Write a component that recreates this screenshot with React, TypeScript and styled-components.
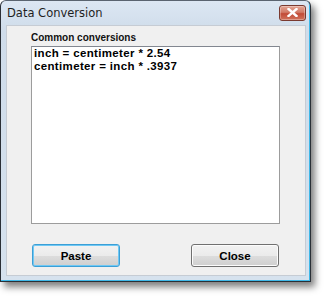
import React from "react";
import styled, { createGlobalStyle } from "styled-components";

const GlobalStyle = createGlobalStyle`
  html, body {
    margin: 0;
    padding: 0;
    background: #ffffff;
  }
`;

const Page = styled.div`
  width: 325px;
  height: 296px;
  background: #ffffff;
  overflow: hidden;
`;

const Window = styled.div`
  box-sizing: border-box;
  width: 311px;
  height: 282px;
  border: 1px solid #2a2f36;
  border-top-color: #5a6470;
  border-radius: 6px 6px 0 0;
  background: linear-gradient(#dce7f3, #cfdcea 30px, #d6e2ee);
  box-shadow: 4px 5px 7px rgba(0, 0, 0, 0.5), inset -1px -1px 0 #3fb8e8;
  display: flex;
  flex-direction: column;
  font-family: "Liberation Sans", Arial, sans-serif;
`;

const TitleBar = styled.div`
  height: 24px;
  display: flex;
  align-items: center;
  justify-content: space-between;
  padding: 0 4px 0 6px;
  flex-shrink: 0;
`;

const Title = styled.span`
  font-family: "DejaVu Sans", "Liberation Sans", sans-serif;
  font-size: 11.5px;
  color: #1e1e1e;
  margin-top: -1px;
`;

const CloseBox = styled.div`
  box-sizing: border-box;
  width: 27px;
  height: 16px;
  margin-top: -1px;
  border: 1px solid #7a3a30;
  border-radius: 3px;
  background: linear-gradient(#e3a696, #d27a66 45%, #c24a36 55%, #d0735c);
  display: flex;
  align-items: center;
  justify-content: center;
  box-shadow: inset 0 0 0 1px rgba(255, 255, 255, 0.3);
`;

const Client = styled.div`
  flex: 1;
  margin: 0 4px 5px 5px;
  background: #f0f0f0;
  border: 1px solid #c6ccd4;
  padding: 4px 0 0 24px;
  display: flex;
  flex-direction: column;
`;

const GroupLabel = styled.div`
  font-size: 10px;
  font-weight: bold;
  color: #111;
  height: 16px;
  line-height: 16px;
`;

const TextArea = styled.div`
  box-sizing: border-box;
  width: 249px;
  height: 178px;
  background: #ffffff;
  border: 1px solid #9c9c9c;
  border-top-color: #828790;
  padding: 0 2px;
`;

const Line = styled.div`
  font-size: 11.5px;
  font-weight: bold;
  color: #000;
  line-height: 13px;
  letter-spacing: 0.35px;
`;

const ButtonRow = styled.div`
  display: flex;
  justify-content: space-between;
  width: 247px;
  margin-top: 20px;
  margin-left: 1px;
`;

const Button = styled.div<{ $focused?: boolean }>`
  box-sizing: border-box;
  width: 88px;
  height: 23px;
  border-radius: 3px;
  border: 1px solid ${(p) => (p.$focused ? "#3c9fd6" : "#707070")};
  background: linear-gradient(#f2f2f2, #ebebeb 50%, #dddddd 51%, #cfcfcf);
  box-shadow: ${(p) =>
    p.$focused ? "inset 0 0 0 1px #6fc8f4" : "inset 0 0 0 1px #fcfcfc"};
  display: flex;
  align-items: center;
  justify-content: center;
  font-size: 11.5px;
  font-weight: bold;
  color: #000;
`;

export default function App() {
  return (
    <Page>
      <GlobalStyle />
      <Window>
        <TitleBar>
          <Title>Data Conversion</Title>
          <CloseBox>
            <svg width="11" height="9" viewBox="0 0 11 9">
              <path
                d="M1.5 1 L9.5 8 M9.5 1 L1.5 8"
                stroke="#ffffff"
                strokeWidth="2.4"
                strokeLinecap="square"
              />
            </svg>
          </CloseBox>
        </TitleBar>
        <Client>
          <GroupLabel>Common conversions</GroupLabel>
          <TextArea>
            <Line>inch = centimeter * 2.54</Line>
            <Line>centimeter = inch * .3937</Line>
          </TextArea>
          <ButtonRow>
            <Button $focused>Paste</Button>
            <Button>Close</Button>
          </ButtonRow>
        </Client>
      </Window>
    </Page>
  );
}
